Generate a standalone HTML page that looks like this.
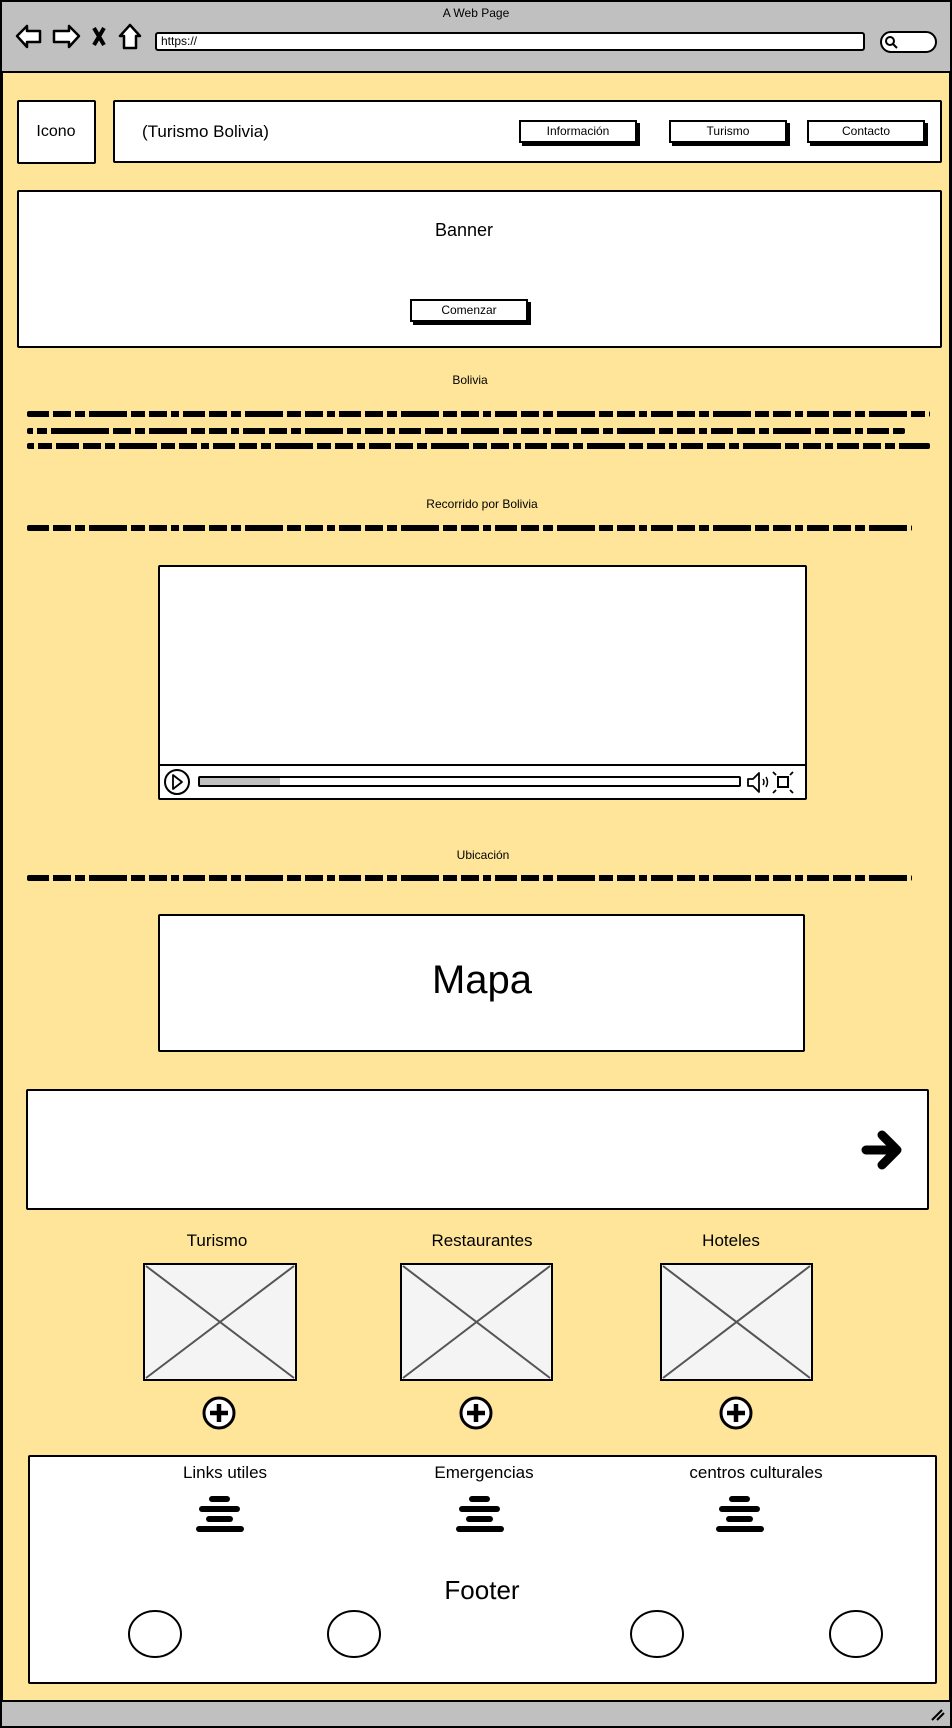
<!DOCTYPE html>
<html><head><meta charset="utf-8">
<style>
*{margin:0;padding:0;box-sizing:border-box}
body{width:952px;height:1728px;position:relative;background:#FFE599;font-family:"Liberation Sans",sans-serif;color:#000;overflow:hidden}
.a{position:absolute}
.box{position:absolute;background:#fff;border:2px solid #000;border-radius:2px}
.t{position:absolute;white-space:nowrap;transform:translateX(-50%)}
.btn{position:absolute;background:#fff;border:2px solid #000;box-shadow:3px 3px 0 #000;font-size:12px;text-align:center;line-height:19px}
.sq{position:absolute;height:6px;background:repeating-linear-gradient(90deg,#000 0 22px,transparent 22px 26px,#000 26px 44px,transparent 44px 48px,#000 48px 58px,transparent 58px 62px,#000 62px 100px,transparent 100px 104px,#000 104px 118px,transparent 118px 122px,#000 122px 140px,transparent 140px 144px,#000 144px 152px,transparent 152px 156px);border-radius:2px}
.hb{position:absolute;height:6px;background:#000;border-radius:3px}
</style></head><body>
<div class="a" style="left:0;top:0;width:952px;height:73px;background:#c0c0c0;border:2px solid #000"></div>
<div class="t" style="left:476px;top:6px;font-size:12px">A Web Page</div>
<svg class="a" style="left:14px;top:22px" width="130" height="30" viewBox="0 0 130 30">
<path d="M3 14 L13 4 L13 9 L26 9 L26 20 L13 20 L13 25 Z" fill="#fff" stroke="#000" stroke-width="2.5" stroke-linejoin="round"/>
<path d="M65 14 L55 4 L55 9 L40 9 L40 20 L55 20 L55 25 Z" fill="#fff" stroke="#000" stroke-width="2.5" stroke-linejoin="round"/>
<path d="M80 6 L90 23 M90 6 L80 23" stroke="#000" stroke-width="4"/>
<path d="M116 3 L106 14 L110 14 L110 26 L122 26 L122 14 L126 14 Z" fill="#fff" stroke="#000" stroke-width="2.5" stroke-linejoin="round"/>
</svg>
<div class="a" style="left:155px;top:32px;width:710px;height:19px;background:#fff;border:2px solid #000;border-radius:3px;font-size:12px;line-height:15px;padding-left:4px">https://</div>
<div class="a" style="left:880px;top:31px;width:57px;height:22px;background:#fff;border:2px solid #000;border-radius:11px"></div>
<svg class="a" style="left:884px;top:35px" width="14" height="14"><circle cx="6" cy="6" r="4" fill="none" stroke="#000" stroke-width="2"/><path d="M9 9 L13 13" stroke="#000" stroke-width="2"/></svg>
<div class="a" style="left:0;top:73px;width:3px;height:1630px;background:#000"></div>
<div class="a" style="right:0;top:73px;width:3px;height:1630px;background:#000"></div>
<div class="a" style="left:0;top:1700px;width:952px;height:28px;background:#c0c0c0;border:2px solid #000"></div>
<svg class="a" style="left:930px;top:1708px" width="16" height="14"><path d="M2 12 L12 2 M7 12 L14 5" stroke="#000" stroke-width="2"/></svg>

<div class="box" style="left:17px;top:100px;width:79px;height:64px"></div>
<div class="t" style="left:56px;top:123px;font-size:16px">Icono</div>
<div class="box" style="left:113px;top:100px;width:829px;height:63px"></div>
<div class="a" style="left:142px;top:122px;font-size:17px">(Turismo Bolivia)</div>
<div class="btn" style="left:519px;top:120px;width:118px;height:23px">Información</div>
<div class="btn" style="left:669px;top:120px;width:118px;height:23px">Turismo</div>
<div class="btn" style="left:807px;top:120px;width:118px;height:23px">Contacto</div>

<div class="box" style="left:17px;top:190px;width:925px;height:158px"></div>
<div class="t" style="left:464px;top:220px;font-size:18px">Banner</div>
<div class="btn" style="left:410px;top:299px;width:118px;height:23px">Comenzar</div>

<div class="t" style="left:470px;top:373px;font-size:12px">Bolivia</div>
<div class="sq" style="left:27px;top:411px;width:903px"></div>
<div class="sq" style="left:27px;top:428px;width:878px;background-position:60px 0"></div>
<div class="sq" style="left:27px;top:443px;width:903px;background-position:30px 0"></div>

<div class="t" style="left:482px;top:497px;font-size:12px">Recorrido por Bolivia</div>
<div class="sq" style="left:27px;top:525px;width:885px"></div>

<div class="box" style="left:158px;top:565px;width:649px;height:235px"></div>
<div class="a" style="left:158px;top:764px;width:649px;height:2px;background:#000"></div>
<svg class="a" style="left:162px;top:768px" width="645" height="30">
<circle cx="15" cy="14" r="12" fill="#fff" stroke="#000" stroke-width="2"/>
<path d="M11 7 L20 14 L11 21 Z" fill="none" stroke="#000" stroke-width="1.8" stroke-linejoin="round"/>
<rect x="37" y="9" width="541" height="9" rx="1" fill="#fff" stroke="#000" stroke-width="2"/>
<rect x="38" y="10" width="80" height="7" fill="#c0c0c0"/>
<path d="M586 11 L591 11 L597 5 L597 24 L591 18 L586 18 Z" fill="#fff" stroke="#000" stroke-width="1.8" stroke-linejoin="round"/>
<path d="M601 11 Q603 14 601 17 M604 9 Q607 14 604 19" fill="none" stroke="#000" stroke-width="1.5"/>
<rect x="616" y="9" width="10" height="10" fill="none" stroke="#000" stroke-width="2"/>
<path d="M611 4 L614 7 M631 4 L628 7 M611 25 L614 22 M631 25 L628 22" stroke="#000" stroke-width="1.8"/>
</svg>

<div class="t" style="left:483px;top:848px;font-size:12px">Ubicación</div>
<div class="sq" style="left:27px;top:875px;width:885px"></div>

<div class="box" style="left:158px;top:914px;width:647px;height:138px"></div>
<div class="t" style="left:482px;top:958px;font-size:40px">Mapa</div>

<div class="box" style="left:26px;top:1089px;width:903px;height:121px"></div>
<svg class="a" style="left:860px;top:1126px" width="46" height="48"><path d="M6 24 L34 24 M22 9 L37 24 L22 39" fill="none" stroke="#000" stroke-width="9" stroke-linecap="round" stroke-linejoin="round"/></svg>

<div class="t" style="left:217px;top:1231px;font-size:17px">Turismo</div>
<div class="t" style="left:482px;top:1231px;font-size:17px">Restaurantes</div>
<div class="t" style="left:731px;top:1231px;font-size:17px">Hoteles</div>
<svg class="a" style="left:0;top:0" width="952" height="1450">
<g fill="#f4f4f4" stroke="#000" stroke-width="2">
<rect x="144" y="1264" width="152" height="116"/><rect x="401" y="1264" width="151" height="116"/><rect x="661" y="1264" width="151" height="116"/></g>
<g stroke="#555" stroke-width="2">
<path d="M146 1266 L294 1378 M294 1266 L146 1378"/>
<path d="M403 1266 L550 1378 M550 1266 L403 1378"/>
<path d="M663 1266 L810 1378 M810 1266 L663 1378"/></g>
<g fill="#fff" stroke="#000" stroke-width="3">
<circle cx="219" cy="1413" r="15"/><circle cx="476" cy="1413" r="15"/><circle cx="736" cy="1413" r="15"/></g>
<g stroke="#000" stroke-width="4.5">
<path d="M210 1413 H228 M219 1404 V1422"/><path d="M467 1413 H485 M476 1404 V1422"/><path d="M727 1413 H745 M736 1404 V1422"/></g>
</svg>

<div class="box" style="left:28px;top:1455px;width:909px;height:229px"></div>
<div class="t" style="left:225px;top:1463px;font-size:17px">Links utiles</div>
<div class="t" style="left:484px;top:1463px;font-size:17px">Emergencias</div>
<div class="t" style="left:756px;top:1463px;font-size:17px">centros culturales</div>
<div class="hb" style="left:209px;top:1496px;width:21px"></div>
<div class="hb" style="left:199px;top:1506px;width:41px"></div>
<div class="hb" style="left:206px;top:1516px;width:27px"></div>
<div class="hb" style="left:196px;top:1526px;width:48px"></div>
<div class="hb" style="left:469px;top:1496px;width:21px"></div>
<div class="hb" style="left:459px;top:1506px;width:41px"></div>
<div class="hb" style="left:466px;top:1516px;width:27px"></div>
<div class="hb" style="left:456px;top:1526px;width:48px"></div>
<div class="hb" style="left:729px;top:1496px;width:21px"></div>
<div class="hb" style="left:719px;top:1506px;width:41px"></div>
<div class="hb" style="left:726px;top:1516px;width:27px"></div>
<div class="hb" style="left:716px;top:1526px;width:48px"></div>
<div class="t" style="left:482px;top:1575px;font-size:26px">Footer</div>
<svg class="a" style="left:0;top:1600px" width="952" height="70">
<g fill="#fff" stroke="#000" stroke-width="2">
<ellipse cx="155" cy="34" rx="26" ry="23"/><ellipse cx="354" cy="34" rx="26" ry="23"/>
<ellipse cx="657" cy="34" rx="26" ry="23"/><ellipse cx="856" cy="34" rx="26" ry="23"/></g>
</svg>
</body></html>
